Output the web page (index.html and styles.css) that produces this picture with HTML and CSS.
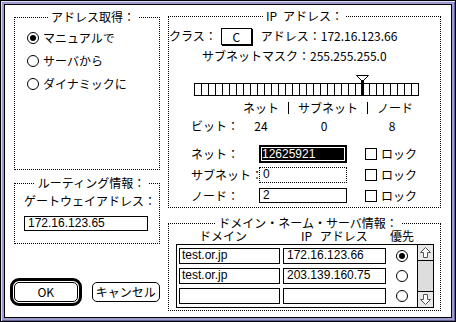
FILE: index.html
```html
<!DOCTYPE html>
<html lang="ja">
<head>
<meta charset="utf-8">
<link rel="stylesheet" href="styles.css">
</head>
<body>
<div class="window">
  <div class="dialog">
    <div class="col col-left">
      <fieldset class="group g-acq">
        <legend>アドレス取得：</legend>
        <div class="radio-row"><span class="radio on"></span>マニュアルで</div>
        <div class="radio-row"><span class="radio"></span>サーバから</div>
        <div class="radio-row"><span class="radio"></span>ダイナミックに</div>
      </fieldset>
      <fieldset class="group g-route">
        <legend>ルーティング情報：</legend>
        <div class="gw-label">ゲートウェイアドレス：</div>
        <div class="field gw-field">172.16.123.65</div>
      </fieldset>
      <div class="buttons">
        <div class="btn-default"><div class="btn">OK</div></div>
        <div class="btn cancel">キャンセル</div>
      </div>
    </div>
    <div class="col col-right">
      <fieldset class="group g-ip">
        <legend class="ip-legend">IP アドレス：</legend>
        <div class="class-row">
          <span>クラス：</span>
          <span class="popup">C</span>
          <span>アドレス：172.16.123.66</span>
        </div>
        <div class="mask-row">サブネットマスク：255.255.255.0</div>
        <div class="slider">
          <svg class="thumb" width="13" height="21" viewBox="0 0 13 21">
            <path d="M0.5 0.5 H12.5 L7.5 5.5 H5.5 Z" fill="#fff" stroke="#000"/>
            <rect x="5" y="5" width="3" height="16" fill="#000"/>
          </svg>
          <div class="bar"></div>
        </div>
        <div class="cols-row">
          <span>ネット</span><span class="sep"></span><span>サブネット</span><span class="sep"></span><span>ノード</span>
        </div>
        <div class="bits-row">
          <span>ビット：</span><span class="num">24</span><span class="num">0</span><span class="num">8</span>
        </div>
        <div class="io-rows">
          <div class="io-row">
            <span class="io-label">ネット：</span>
            <div class="field io-field net-field">12625921</div>
            <span class="check"></span><span>ロック</span>
          </div>
          <div class="io-row">
            <span class="io-label">サブネット：</span>
            <div class="field io-field sub-field">0</div>
            <span class="check"></span><span>ロック</span>
          </div>
          <div class="io-row">
            <span class="io-label">ノード：</span>
            <div class="field io-field node-field">2</div>
            <span class="check"></span><span>ロック</span>
          </div>
        </div>
      </fieldset>
      <fieldset class="group g-dns">
        <legend>ドメイン・ネーム・サーバ情報：</legend>
        <div class="dns-head">
          <span class="h-domain">ドメイン</span><span class="h-ip">IP アドレス</span><span>優先</span>
        </div>
        <div class="list">
          <div class="list-fields">
            <div class="list-row">
              <div class="field dom">test.or.jp</div>
              <div class="field ipf">172.16.123.66</div>
              <div class="rcell"><span class="radio on"></span></div>
            </div>
            <div class="list-row">
              <div class="field dom">test.or.jp</div>
              <div class="field ipf">203.139.160.75</div>
              <div class="rcell"><span class="radio"></span></div>
            </div>
            <div class="list-row">
              <div class="field dom"></div>
              <div class="field ipf"></div>
              <div class="rcell"><span class="radio"></span></div>
            </div>
          </div>
          <div class="scroll">
            <div class="sbtn up">
              <svg width="11" height="11" viewBox="0 0 11 11"><path d="M5.5 0.5 L10.5 5.5 L7.5 5.5 L7.5 10.5 L3.5 10.5 L3.5 5.5 L0.5 5.5 Z" fill="#fff" stroke="#555"/></svg>
            </div>
            <div class="sbtn down">
              <svg width="11" height="11" viewBox="0 0 11 11"><path d="M5.5 10.5 L10.5 5.5 L7.5 5.5 L7.5 0.5 L3.5 0.5 L3.5 5.5 L0.5 5.5 Z" fill="#fff" stroke="#555"/></svg>
            </div>
          </div>
        </div>
      </fieldset>
    </div>
  </div>
</div>
</body>
</html>
```

FILE: styles.css
```css
* { box-sizing: border-box; }
body {
  margin: 0;
  font-family: "Noto Sans CJK JP", sans-serif;
  font-size: 12px;
  line-height: 14px;
  color: #000;
  background: #fff;
  white-space: nowrap;
}
.window {
  width: 456px;
  height: 322px;
  border: 1px solid #000;
  background: #9c9cce;
  padding: 3px;
  box-shadow: inset 1px 1px 0 #dcdcff, inset -1px -1px 0 #63639c;
}
.dialog {
  height: 100%;
  border: 1px solid #000;
  background: #fff;
  display: flex;
  gap: 8px;
  padding: 0 10px 0 9px;
}
.col { display: flex; flex-direction: column; }
.col-left { width: 146px; }
.col-right { width: 273px; }

.group {
  margin: 0;
  padding: 0;
  border: 1px dotted #000;
  min-width: 0;
}
.group legend {
  margin: 0 auto;
  padding: 0 3px;
  line-height: 14px;
}
.ip-legend { word-spacing: 3px; }

/* left column */
.g-acq { margin-top: 5px; height: 160px; padding: 2px 0 0 12px; }
.radio-row { display: flex; align-items: center; height: 23px; gap: 4px; }
.radio {
  width: 12px; height: 12px;
  border: 1px solid #000;
  border-radius: 50%;
  display: flex; align-items: center; justify-content: center;
  flex: none;
  background: #fff;
}
.radio.on::after {
  content: "";
  width: 6px; height: 6px;
  border-radius: 50%;
  background: #000;
}
.g-route { margin-top: 6px; height: 68px; padding: 4px 0 0 9px; }
.gw-field { margin-top: 8px; width: 124px; height: 15px; padding-left: 4px; }

.field {
  border: 1px solid #000;
  font-family: "Liberation Sans", sans-serif;
  font-size: 12px;
  line-height: 13px;
  padding-left: 3px;
  white-space: nowrap;
  overflow: hidden;
}

.buttons { display: flex; align-items: center; gap: 10px; margin: 34px 0 0 -4px; }
.btn-default {
  border: 3px solid #000;
  border-radius: 9px;
  padding: 1px;
  width: 73px;
  height: 28px;
}
.btn {
  border: 1px solid #000;
  border-radius: 5px;
  height: 20px;
  display: flex; align-items: center; justify-content: center;
}
.btn-default .btn { height: 100%; }
.cancel { width: 70px; }

/* IP group */
.g-ip { margin-top: 4px; height: 199px; padding: 0; }
.class-row { display: flex; align-items: center; height: 20px; margin-top: 3px; }
.popup {
  width: 31px; height: 17px;
  border: 1px solid #000;
  box-shadow: 1px 1px 0 #000;
  margin: 0 9px 0 4px;
  text-align: center;
  line-height: 15px;
}
.mask-row { margin-top: 3px; padding-left: 33px; }
.slider { position: relative; margin: 12px 0 0 25px; padding-top: 8px; width: 225px; }
.bar {
  height: 13px;
  border: 1px solid #000;
  background: repeating-linear-gradient(to right, transparent 0 6px, #000 6px 7px);
}
.thumb { position: absolute; left: 162px; top: 0; }
.cols-row { display: flex; align-items: center; height: 14px; margin: 5px 0 0 74px; }
.sep { width: 1px; height: 12px; background: #000; margin: 0 9px; }
.bits-row {
  display: grid;
  grid-template-columns: 50px 40px 86px 50px;
  height: 14px;
  margin: 4px 0 0 22px;
}
.num { text-align: center; }
.io-rows { margin-top: 10px; }
.io-row { display: flex; align-items: center; height: 21px; padding-left: 22px; }
.io-label { width: 68px; flex: none; }
.io-field { width: 88px; flex: none; }
.net-field {
  height: 18px;
  border: 2px solid #000;
  background: #000;
  color: #fff;
  box-shadow: inset 0 0 0 1px #fff;
  padding-left: 1px;
  line-height: 14px;
}
.sub-field { height: 16px; border-style: dotted; }
.node-field { height: 15px; }
.check {
  width: 12px; height: 12px;
  border: 1px solid #000;
  margin: 0 4px 0 18px;
  flex: none;
}

/* DNS group */
.g-dns { margin-top: 8px; height: 95px; padding: 0 0 0 7px; }
.dns-head { display: flex; height: 13px; line-height: 12px; }
.h-domain { margin-left: 23px; width: 102px; }
.h-ip { width: 89px; word-spacing: 5px; }
.list {
  width: 258px;
  height: 64px;
  margin-top: 1px;
  border: 1px solid #000;
  display: flex;
}
.list-fields { width: 240px; display: flex; flex-direction: column; gap: 4px; padding: 3px 0 0 2px; }
.list-row { display: flex; height: 16px; }
.dom { width: 101px; height: 16px; padding-left: 2px; }
.ipf { width: 103px; height: 16px; margin-left: 3px; }
.rcell { width: 31px; display: flex; align-items: center; justify-content: center; }
.scroll {
  width: 16px;
  border-left: 1px solid #000;
  background: #ddd;
  display: flex;
  flex-direction: column;
  justify-content: space-between;
}
.sbtn { height: 16px; display: flex; align-items: center; justify-content: center; background: #e8e8e8; }
.sbtn.up { border-bottom: 1px solid #000; }
.sbtn.down { border-top: 1px solid #000; }
```
